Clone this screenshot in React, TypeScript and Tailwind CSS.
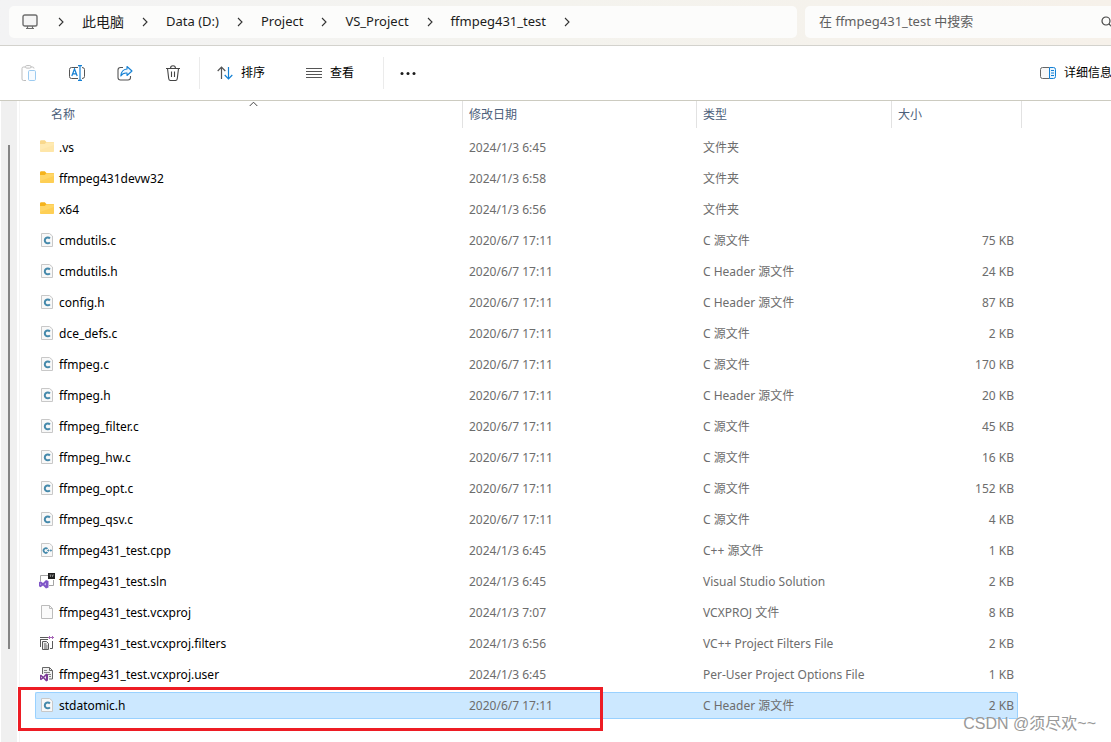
import React from "react";

type Kind = "folder" | "folder-hidden" | "c" | "cpp" | "sln" | "blank" | "filters" | "user";

interface Entry {
  name: string;
  date: string;
  kind: Kind;
  type: string;
  size?: string;
  selected?: boolean;
}

const OLD = "2020/6/7 17:11";

const entries: Entry[] = [
  { name: ".vs", date: "2024/1/3 6:45", kind: "folder-hidden", type: "文件夹" },
  { name: "ffmpeg431devw32", date: "2024/1/3 6:58", kind: "folder", type: "文件夹" },
  { name: "x64", date: "2024/1/3 6:56", kind: "folder", type: "文件夹" },
  { name: "cmdutils.c", date: OLD, kind: "c", type: "C 源文件", size: "75 KB" },
  { name: "cmdutils.h", date: OLD, kind: "c", type: "C Header 源文件", size: "24 KB" },
  { name: "config.h", date: OLD, kind: "c", type: "C Header 源文件", size: "87 KB" },
  { name: "dce_defs.c", date: OLD, kind: "c", type: "C 源文件", size: "2 KB" },
  { name: "ffmpeg.c", date: OLD, kind: "c", type: "C 源文件", size: "170 KB" },
  { name: "ffmpeg.h", date: OLD, kind: "c", type: "C Header 源文件", size: "20 KB" },
  { name: "ffmpeg_filter.c", date: OLD, kind: "c", type: "C 源文件", size: "45 KB" },
  { name: "ffmpeg_hw.c", date: OLD, kind: "c", type: "C 源文件", size: "16 KB" },
  { name: "ffmpeg_opt.c", date: OLD, kind: "c", type: "C 源文件", size: "152 KB" },
  { name: "ffmpeg_qsv.c", date: OLD, kind: "c", type: "C 源文件", size: "4 KB" },
  { name: "ffmpeg431_test.cpp", date: "2024/1/3 6:45", kind: "cpp", type: "C++ 源文件", size: "1 KB" },
  { name: "ffmpeg431_test.sln", date: "2024/1/3 6:45", kind: "sln", type: "Visual Studio Solution", size: "2 KB" },
  { name: "ffmpeg431_test.vcxproj", date: "2024/1/3 7:07", kind: "blank", type: "VCXPROJ 文件", size: "8 KB" },
  { name: "ffmpeg431_test.vcxproj.filters", date: "2024/1/3 6:56", kind: "filters", type: "VC++ Project Filters File", size: "2 KB" },
  { name: "ffmpeg431_test.vcxproj.user", date: "2024/1/3 6:45", kind: "user", type: "Per-User Project Options File", size: "1 KB" },
  { name: "stdatomic.h", date: OLD, kind: "c", type: "C Header 源文件", size: "2 KB", selected: true },
];

const crumbs = ["Data (D:)", "Project", "VS_Project", "ffmpeg431_test"];

function Icon({ children, className = "" }: { children: React.ReactNode; className?: string }) {
  return (
    <svg viewBox="0 0 16 16" fill="none" aria-hidden="true" className={`size-4 shrink-0 ${className}`}>
      {children}
    </svg>
  );
}

function FileIcon({ kind }: { kind: Kind }) {
  switch (kind) {
    case "folder":
    case "folder-hidden":
      return (
        <Icon className={kind === "folder-hidden" ? "mb-px opacity-50" : "mb-px"}>
          <path d="M1 2.5Q1 1.300 2.200 1.300h3.600l1.600 1.700H14q1 0 1 1V6H1z" fill="#f5b31c" />
          <path d="M1 5h4.800L7.400 3.300H14q1 0 1 1V12q0 1-1 1H2q-1 0-1-1z" fill="#ffd667" />
          <path d="M1 11l14-5v6q0 1-1 1H2q-1 0-1-1z" fill="#fdc94a" opacity=".6" />
        </Icon>
      );
    case "c":
      return (
        <Icon className="mb-px">
          <path d="M2.500 1.500h8l3 2.500v10.500h-11z" fill="#f8f8f8" stroke="#c8c8c8" />
          <path d="M10.900 6.500A2.900 2.900 0 1 0 10.900 10.300" stroke="#4589ab" strokeWidth="2" />
        </Icon>
      );
    case "cpp":
      return (
        <Icon className="mb-px">
          <path d="M2.500 1.500h8l3 2.500v10.500h-11z" fill="#f8f8f8" stroke="#c8c8c8" />
          <path d="M8.500 6.900A2.300 2.300 0 1 0 8.500 10.200" stroke="#4589ab" strokeWidth="1.700" />
          <path d="M8 8.500h2.600M11 8.500h2M9.500 7.300v2.400M11.800 7.300v2.400" stroke="#4589ab" strokeWidth=".8" />
        </Icon>
      );
    case "sln":
      return (
        <Icon className="mb-px">
          <path d="M1.500 8V2.500h9M14.500 7v5.500H10" stroke="#a5a5a5" />
          <path d="M9 0h7v6H9z" fill="#202020" />
          <path d="M10.500 2h2M11.500 2v2M13.500 2h1.500M13.500 2v2" stroke="#aaa" strokeWidth=".7" />
          <path d="M0 9.200 1.500 8.200 4 10 7 7 9.500 8v6.500l-2.500 1-3-3-2.500 1.800L0 13.300z" fill="#7f55c7" />
          <path d="m7 9.800-1.800 1.400L7 12.600zM1.300 10.200v2l1-1z" fill="#c9b6ec" />
        </Icon>
      );
    case "blank":
      return (
        <Icon className="mb-px">
          <path d="M2.500 1.500h8l3 3v10h-11z" fill="#fafafa" stroke="#bcbcbc" />
          <path d="M10.500 1.500v3h3" stroke="#bcbcbc" />
        </Icon>
      );
    case "filters":
      return (
        <Icon className="mb-px">
          <path d="M1 2.500h8M1 4.500h8" stroke="#5a5a5a" strokeWidth="1.200" />
          <path d="M1.500 4v8M13.500 6v7.500H11" stroke="#5a5a5a" />
          <path d="M3.500 6.500h4l2 2v6h-6z" fill="#eee" stroke="#5a5a5a" />
          <path d="M5 9h2.500M5 11h3.500M5 13h3.500" stroke="#5a5a5a" />
          <path d="M9 2.500h6M10.500 1v3M13.500 1v3" stroke="#a565b5" />
        </Icon>
      );
    case "user":
      return (
        <Icon className="mb-px">
          <path d="M3.500 8V1.500h7l3 3v8.500H10" fill="#f1f1f1" stroke="#686868" />
          <path d="M10.500 1.500v3h3" stroke="#686868" />
          <path d="M5 4.500h3M5 6.500h6M9 8.500h3M10 10.500h2" stroke="#858585" />
          <path d="M1 9.300 2 8.600l2.300 1.800L7.200 7.500 9 8.300v6.200l-1.800.9-2.900-2.900L2 14.200l-1-.7z" fill="#7b3a96" />
          <path d="m7 10-1.800 1.400L7 12.900zM2.200 10.400v2l1-1z" fill="#eee" />
        </Icon>
      );
  }
}

function Chevron() {
  return (
    <svg viewBox="0 0 6 10" fill="none" aria-hidden="true" className="h-2.5 w-1.5 shrink-0">
      <path d="M1 1l4 4-4 4" stroke="#333" strokeWidth="1.100" />
    </svg>
  );
}

function AddressBar() {
  return (
    <header className="flex h-[46px] items-start gap-2 overflow-hidden border-b border-[#d3d2cd] bg-linear-to-r from-[#f3f3f4] via-[#f4f3ee] to-[#f6f1ea] pt-1.5 pl-[9px]">
      <nav aria-label="路径" className="flex h-8 min-w-0 flex-1 items-center rounded-[5px] bg-[#fcfcfb] pl-[13px] text-[13px] text-[#1c1c1c]">
        <Icon>
          <rect x="1" y="1" width="14" height="11" rx="1.800" fill="#f5f5f5" stroke="#6e6e6e" strokeWidth="1.400" />
          <path d="M5.500 12v2.500M10.500 12v2.500M4 14.500h8" stroke="#6e6e6e" strokeWidth="1.200" />
        </Icon>
        <span className="w-5" />
        <Chevron />
        <button type="button" className="px-[18px] text-sm whitespace-nowrap">
          此电脑
        </button>
        <Chevron />
        {crumbs.map((c) => (
          <React.Fragment key={c}>
            <button type="button" className="px-[18px] whitespace-nowrap">
              {c}
            </button>
            <Chevron />
          </React.Fragment>
        ))}
      </nav>
      <div className="flex h-8 w-[306px] shrink-0 items-center rounded-l-[5px] bg-[#fcfcfb] pl-3.5">
        <input
          type="search"
          aria-label="搜索"
          placeholder="在 ffmpeg431_test 中搜索"
          className="min-w-0 flex-1 bg-transparent text-[13px] outline-none placeholder:text-[#606060]"
        />
        <Icon className="-mr-[5px]">
          <circle cx="6" cy="7" r="4" stroke="#444" strokeWidth="1.200" />
          <path d="m9 10 4 4" stroke="#444" strokeWidth="1.200" />
        </Icon>
      </div>
    </header>
  );
}

function Toolbar() {
  return (
    <div className="flex h-[55px] items-center overflow-hidden border-b border-[#cccbc0] bg-white pl-[21px] text-xs text-black">
      <div className="flex gap-8">
        <button type="button" aria-label="粘贴">
          <Icon>
            <path d="M4 2H2.500Q1 2 1 3.500v10.500Q1 15.500 2.500 15.500H5M10 2h1.500Q13 2 13 3.500" stroke="#bdbdbd" />
            <rect x="4.500" y=".6" width="5.500" height="2.500" rx="1.200" stroke="#bdbdbd" />
            <rect x="7.500" y="5.500" width="7" height="10" rx="1.200" fill="#f7fbff" stroke="#9ccbf0" />
          </Icon>
        </button>
        <button type="button" aria-label="重命名">
          <Icon>
            <path d="M9 2.500H2.500Q.5 2.500.5 4.500v7q0 2 2 2H9M13 2.500q2.500 0 2.500 2v7q0 2-2.500 2" stroke="#555" />
            <path d="M11 .8v14.400M9 .7h4M9 15.300h4" stroke="#1480d4" strokeWidth="1.200" />
            <path d="m2.800 11 2.700-7 2.700 7M3.800 8.800h3.500" stroke="#1480d4" strokeWidth="1.200" />
          </Icon>
        </button>
        <button type="button" aria-label="共享">
          <Icon>
            <path d="M6 2.500H3.500q-2.500 0-2.500 2.500v7.500Q1 15 3.500 15H11q2.500 0 2.500-2.500V11" stroke="#555" strokeWidth="1.100" />
            <path d="M10 1.500 15 6l-5 4.500V8Q6 7.500 3.800 11 4.300 4.500 10 4z" fill="#f1f8fe" stroke="#1480d4" strokeWidth="1.100" strokeLinejoin="round" />
          </Icon>
        </button>
        <button type="button" aria-label="删除">
          <Icon>
            <path d="M1 3.500h14M5.500 3.500Q5.500.7 8 .7t2.500 2.800M2.500 3.500l1.200 10q.2 2 2 2h4.600q1.800 0 2-2l1.200-10M6.500 6.500v5.500M9.500 6.500v5.500" stroke="#444" strokeWidth="1.100" />
          </Icon>
        </button>
      </div>
      <span className="ml-[18px] h-8 w-px bg-[#ebebeb]" />
      <button type="button" className="ml-[17px] flex items-center gap-2">
        <Icon>
          <path d="M4.500 14V2M.7 6l3.800-4 3.800 4" stroke="#555" strokeWidth="1.200" />
          <path d="M11.500 2v12M7.700 10l3.800 4 3.800-4" stroke="#1480d4" strokeWidth="1.200" />
        </Icon>
        排序
      </button>
      <button type="button" className="ml-[41px] flex items-center gap-2">
        <Icon>
          <path d="M0 3.500h16M0 6.500h16M0 9.500h16M0 12.500h16" stroke="#555" />
        </Icon>
        查看
      </button>
      <span className="ml-[29px] h-8 w-px bg-[#ebebeb]" />
      <button type="button" aria-label="更多" className="ml-4">
        <Icon>
          <g fill="#1b1b1b">
            <circle cx="2" cy="8.500" r="1.500" />
            <circle cx="8" cy="8.500" r="1.500" />
            <circle cx="14" cy="8.500" r="1.500" />
          </g>
        </Icon>
      </button>
      <button type="button" className="-mr-px ml-auto flex items-center gap-2 whitespace-nowrap">
        <Icon>
          <path d="M9.500 2.500h-7q-2 0-2 2v7q0 2 2 2h7" fill="#f7f7f7" stroke="#666" />
          <path d="M9.500 2.500H13.500q2 0 2 2v7q0 2-2 2h-4z" fill="#eaf5fe" stroke="#1480d4" />
          <path d="M11 5.500h3M11 8h3M11 10.500h3" stroke="#1480d4" />
        </Icon>
        详细信息
      </button>
    </div>
  );
}

function HeaderCell({ children, last = false }: { children: React.ReactNode; last?: boolean }) {
  return (
    <th scope="col" className="p-0 align-top font-normal">
      <div className={`flex h-[27px] items-center border-l border-[#e2e2e2] pl-1.5 ${last ? "border-r" : ""}`}>{children}</div>
    </th>
  );
}

function Row({ entry }: { entry: Entry }) {
  const fill = entry.selected ? "border-[#99d1ff] bg-[#cce8ff]" : "border-transparent";
  const cell = `flex h-[27px] items-center border-y whitespace-nowrap ${fill}`;
  return (
    <tr aria-selected={entry.selected ?? false} className="h-[31px]">
      <td className="p-0">
        <div className={`${cell} gap-1 rounded-l-xs border-l pl-[3px] text-black`}>
          <FileIcon kind={entry.kind} />
          {entry.name}
        </div>
      </td>
      <td className="p-0">
        <div className={`${cell} pl-[7px]`}>{entry.date}</div>
      </td>
      <td className="p-0">
        <div className={`${cell} pl-[7px]`}>{entry.type}</div>
      </td>
      <td className="p-0 pr-1">
        <div className={`${cell} justify-end rounded-r-xs border-r pr-[3px]`}>{entry.size}</div>
      </td>
    </tr>
  );
}

export default function App() {
  return (
    <div className="flex min-h-screen flex-col overflow-hidden bg-white font-['Noto_Sans','Noto_Sans_CJK_SC',sans-serif]">
      <AddressBar />
      <Toolbar />
      <main className="relative flex flex-1">
        <div className="ml-px flex w-4 shrink-0 justify-center bg-[#f0f0f0] pt-11">
          <div className="h-[504px] w-0.5 bg-[#858585]" />
        </div>
        <div className="ml-0.5 flex-1 border-l border-[#f5f5f5] pr-[89px] pl-[15px]">
          <table className="w-full table-fixed border-collapse text-xs text-[#6d6d6d]">
            <colgroup>
              <col />
              <col className="w-[234px]" />
              <col className="w-[195px]" />
              <col className="w-[131px]" />
            </colgroup>
            <thead className="text-left text-[#4c607a]">
              <tr className="h-[31px]">
                <th scope="col" className="p-0 align-top font-normal">
                  <div className="relative flex h-[27px] items-center pl-4">
                    名称
                    <svg viewBox="0 0 9 6" fill="none" aria-hidden="true" className="absolute top-0 right-0 left-2.5 mx-auto h-1.5 w-[9px]">
                      <path d="M.7 5 4.500 1.200 8.300 5" stroke="#444" />
                    </svg>
                  </div>
                </th>
                <HeaderCell>修改日期</HeaderCell>
                <HeaderCell>类型</HeaderCell>
                <HeaderCell last>大小</HeaderCell>
              </tr>
            </thead>
            <tbody>
              {entries.map((e) => (
                <Row key={e.name} entry={e} />
              ))}
            </tbody>
          </table>
        </div>
        <div className="pointer-events-none absolute top-[586px] left-[18px] h-11 w-[585px] border-3 border-[#ed1c24]" />
        <div className="pointer-events-none absolute right-[15px] bottom-1.5 font-['Liberation_Sans','Noto_Sans_CJK_SC',sans-serif] text-base leading-6 text-[#999] [text-shadow:1px_1px_0_#fff]">
          CSDN @须尽欢~~
        </div>
      </main>
    </div>
  );
}
